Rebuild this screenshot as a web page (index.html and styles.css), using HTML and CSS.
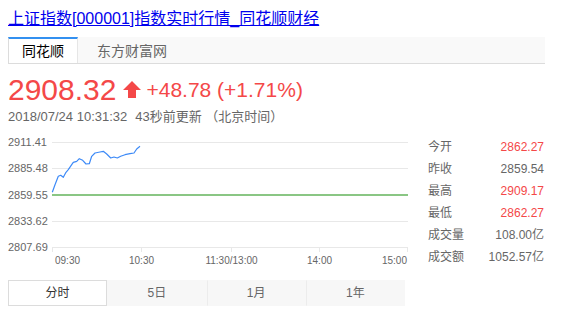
FILE: index.html
```html
<!DOCTYPE html>
<html lang="zh-CN">
<head>
    <meta charset="UTF-8">
    <meta name="viewport" content="width=device-width, initial-scale=1.0">
    <title>上证指数</title>
    <link rel="stylesheet" href="styles.css">
</head>
<body>
    <a class="title" href="#">上证指数[000001]指数实时行情_同花顺财经</a>

    <div class="source-tabs">
        <div class="source-tab active">同花顺</div>
        <div class="source-tab">东方财富网</div>
    </div>

    <div class="price-line">
        <span class="price">2908.32</span>
        <svg class="arrow" width="18" height="18" viewBox="0 0 18 18">
            <polygon points="9,0 18,9 13,9 13,17 5,17 5,9 0,9" fill="#f44848"/>
        </svg>
        <span class="change">+48.78 (+1.71%)</span>
    </div>
    <div class="updated">2018/07/24 10:31:32<span class="ago">43秒前更新 （北京时间）</span></div>

    <div class="quote">
        <svg class="chart" width="402" height="135" viewBox="0 0 402 135">
            <g stroke="#e8e8e8" stroke-width="1">
                <line x1="44" y1="7.5" x2="400" y2="7.5"/>
                <line x1="44" y1="33.5" x2="400" y2="33.5"/>
                <line x1="44" y1="86.5" x2="400" y2="86.5"/>
                <line x1="44" y1="112.5" x2="400" y2="112.5"/>
                <line x1="44.5" y1="112" x2="44.5" y2="117"/>
                <line x1="133.5" y1="112" x2="133.5" y2="117"/>
                <line x1="223.5" y1="112" x2="223.5" y2="117"/>
                <line x1="311.5" y1="112" x2="311.5" y2="117"/>
                <line x1="399.5" y1="112" x2="399.5" y2="117"/>
            </g>
            <line x1="44" y1="60" x2="400" y2="60" stroke="#63b35b" stroke-width="1.3"/>
            <polyline fill="none" stroke="#3d8af7" stroke-width="1.2" stroke-linejoin="round"
                points="44.3,57.3 47,49.7 50.3,41.3 52.7,40.3 55.3,42.3 58,37.3 60.3,34.7 63.7,29.7 65.3,27.3 68.7,26.3 71.3,23.7 74.7,25.3 78,29 81.3,28.7 83.7,21.3 87,18 92,17 95.3,16.3 98.7,19 102.7,23 106,22 109.3,23 112.7,21.3 117,19.7 122,18.7 126,18 128.7,14 132,11.3"/>
            <g class="axis-y">
                <text x="0" y="11">2911.41</text>
                <text x="0" y="37">2885.48</text>
                <text x="0" y="64">2859.55</text>
                <text x="0" y="90">2833.62</text>
                <text x="0" y="116">2807.69</text>
            </g>
            <g class="axis-x">
                <text x="47" y="129">09:30</text>
                <text x="133.5" y="129" text-anchor="middle">10:30</text>
                <text x="223.5" y="129" text-anchor="middle">11:30/13:00</text>
                <text x="311.5" y="129" text-anchor="middle">14:00</text>
                <text x="399" y="129" text-anchor="end">15:00</text>
            </g>
        </svg>

        <div class="stats">
            <div class="stat"><span>今开</span><span class="up">2862.27</span></div>
            <div class="stat"><span>昨收</span><span>2859.54</span></div>
            <div class="stat"><span>最高</span><span class="up">2909.17</span></div>
            <div class="stat"><span>最低</span><span class="up">2862.27</span></div>
            <div class="stat"><span>成交量</span><span>108.00亿</span></div>
            <div class="stat"><span>成交额</span><span>1052.57亿</span></div>
        </div>
    </div>

    <div class="range-tabs">
        <div class="range-tab active">分时</div>
        <div class="range-tab">5日</div>
        <div class="range-tab">1月</div>
        <div class="range-tab">1年</div>
    </div>
</body>
</html>
```

FILE: styles.css
```css
body {
    margin: 8px;
    font-family: "Liberation Sans", Arial, "Noto Sans CJK SC", sans-serif;
    color: #666;
    background-color: #fff;
}
.title {
    display: block;
    font-size: 16px;
    line-height: 22px;
    color: #0000ee;
    text-decoration: underline;
    width: max-content;
}
.source-tabs {
    display: flex;
    margin-top: 7px;
    width: 537px;
    height: 26px;
    background-color: #f9f9f9;
    border-bottom: 1px solid #dcdcdc;
}
.source-tab {
    width: 70px;
    font-size: 14px;
    line-height: 24px;
    text-align: center;
    color: #666;
    border-top: 2px solid transparent;
}
.source-tab.active {
    width: 68px;
    color: #000;
    background-color: #fff;
    border-top-color: #3390f0;
    border-left: 1px solid #dcdcdc;
    border-right: 1px solid #e6e6e6;
}
.source-tab + .source-tab {
    margin-left: 14px;
    width: 80px;
}
.price-line {
    display: flex;
    align-items: center;
    margin-top: 8px;
    height: 36px;
    color: #f44848;
}
.price {
    font-size: 30px;
}
.arrow {
    margin-left: 7px;
    margin-right: 5px;
}
.change {
    font-size: 21px;
}
.updated {
    font-size: 13px;
    line-height: 18px;
    color: #666;
}
.ago {
    margin-left: 8px;
}
.quote {
    display: flex;
    margin-top: 9px;
}
.chart {
    display: block;
}
.axis-y text {
    font-size: 11px;
    fill: #666;
}
.axis-x text {
    font-size: 10px;
    fill: #666;
}
.stats {
    margin-left: 18px;
    width: 116px;
    padding-top: 1px;
}
.stat {
    display: flex;
    justify-content: space-between;
    font-size: 12px;
    height: 22px;
    line-height: 22px;
    color: #666;
}
.stat .up {
    color: #f44848;
}
.range-tabs {
    display: flex;
    margin-top: 10px;
    width: 397px;
    height: 26px;
    background-color: #f7f7f7;
}
.range-tab {
    flex: 1;
    font-size: 12px;
    line-height: 24px;
    text-align: center;
    color: #666;
    border: 1px solid transparent;
    border-left-color: #ececec;
}
.range-tab.active {
    color: #333;
    background-color: #fff;
    border-color: #dcdcdc;
}
.range-tab.active + .range-tab {
    border-left-color: transparent;
}
```
